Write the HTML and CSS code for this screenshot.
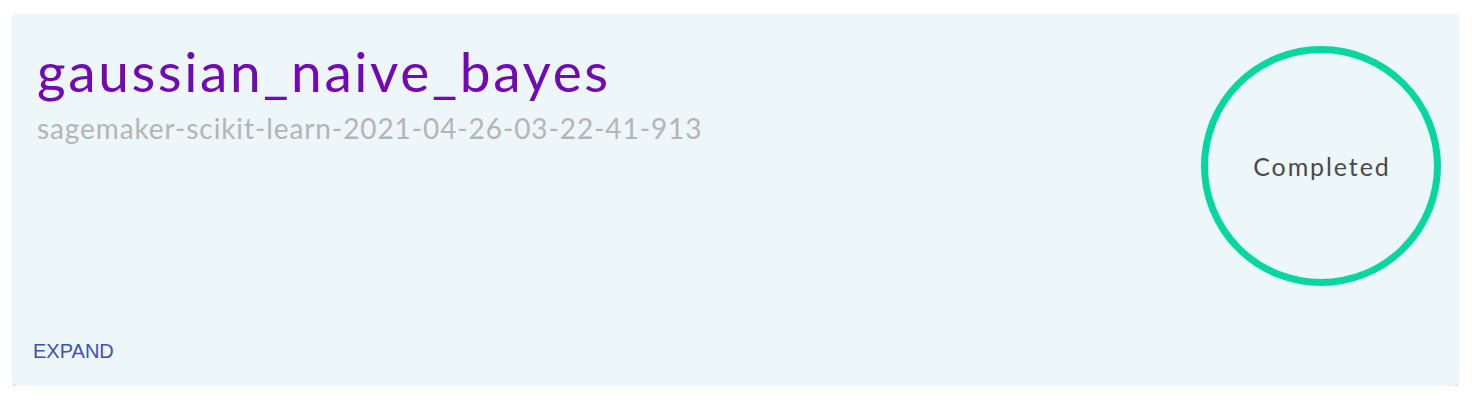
FILE: index.html
```html
<!DOCTYPE html>
<html>
<head>
<meta charset="utf-8">
<link rel="stylesheet" href="styles.css">
</head>
<body>
<div class="page">
  <div class="card">
    <div class="card-main">
      <div class="info">
        <h1 class="title">gaussian_naive_bayes</h1>
        <div class="subtitle">sagemaker-scikit-learn-2021-04-26-03-22-41-913</div>
      </div>
      <div class="status">
        <span class="status-text">Completed</span>
      </div>
    </div>
    <div class="actions">
      <button class="expand">EXPAND</button>
    </div>
  </div>
</div>
</body>
</html>
```
FILE: styles.css
```css
html, body {
  margin: 0;
  padding: 0;
  background: #ffffff;
}
.page {
  padding: 14px 14px 0 13px;
}
.card {
  background: #edf6f9;
  border-radius: 4px;
  box-shadow: 0 2px 1px -1px rgba(0,0,0,0.2), 0 1px 1px 0 rgba(0,0,0,0.14), 0 1px 3px 0 rgba(0,0,0,0.12);
  height: 372px;
  display: flex;
  flex-direction: column;
  justify-content: space-between;
  box-sizing: border-box;
}
.card-main {
  display: flex;
  justify-content: space-between;
  align-items: flex-start;
  padding: 29px 17px 0 24px;
}
.info {
  display: flex;
  flex-direction: column;
}
.title {
  margin: 0;
  font-family: "Lato", sans-serif;
  font-weight: 400;
  font-size: 55px;
  line-height: 56px;
  letter-spacing: 2.6px;
  color: #7209b7;
}
.subtitle {
  font-family: "Lato", sans-serif;
  font-size: 28px;
  line-height: 32px;
  letter-spacing: 0.9px;
  color: #b5b5b5;
  margin-top: 13px;
}
.status {
  width: 240px;
  height: 240px;
  margin-top: 3px;
  box-sizing: border-box;
  border: 7px solid #06d6a0;
  border-radius: 50%;
  display: flex;
  align-items: center;
  justify-content: center;
}
.status-text {
  font-family: "Lato", sans-serif;
  font-size: 25px;
  letter-spacing: 1.9px;
  color: #4a4a4a;
  padding-left: 1.9px;
}
.actions {
  padding: 0 0 19px 12px;
}
.expand {
  background: none;
  border: none;
  padding: 4px 8px;
  font-family: "Liberation Sans", Arial, sans-serif;
  font-size: 20px;
  color: #3f51b5;
  cursor: pointer;
}
```
